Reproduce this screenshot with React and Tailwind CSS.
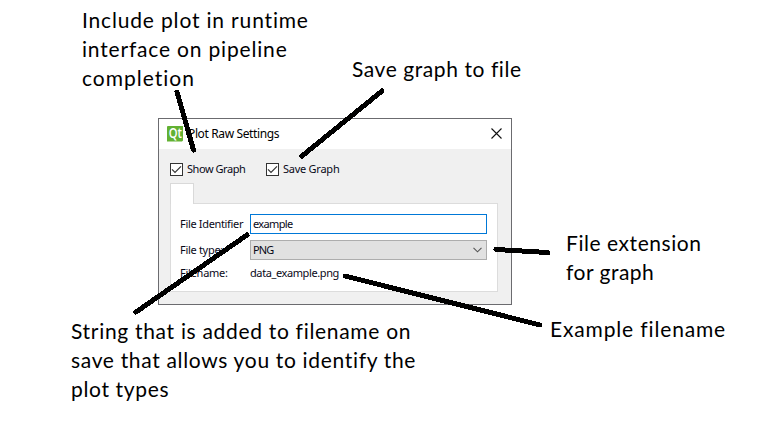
const noteFont = "font-['Lato',sans-serif] text-[21px] leading-[29px] text-black whitespace-nowrap";

function Note({ className, lines }) {
  return (
    <div className={`absolute flex flex-col items-start ${noteFont} ${className}`}>
      {lines.map(([text, tracking]) => (
        <span key={text} className={tracking}>{text}</span>
      ))}
    </div>
  );
}

function QtLogo() {
  return (
    <div className="flex h-4 w-4 shrink-0 items-center justify-center bg-[#62b132] [clip-path:polygon(1px_0,100%_0,100%_15px,15px_100%,0_100%,0_1px)]">
      <span className="origin-center scale-x-[0.8] pb-[2px] font-['Open_Sans',sans-serif] text-[14px] font-semibold leading-[14px] text-white">Qt</span>
    </div>
  );
}

function Check({ label, tracking }) {
  return (
    <label className="flex items-center gap-[4px]">
      <span className="flex h-[13px] w-[13px] items-center justify-center border border-[#333] bg-white">
        <svg width="11" height="11" viewBox="0 0 11 11" fill="none" stroke="#333" strokeWidth="1.2">
          <path d="M1 5.3 L4 8.3 L10 2.3" />
        </svg>
      </span>
      <span className={`w-[58px] whitespace-nowrap ${tracking}`}>{label}</span>
    </label>
  );
}

function Dialog() {
  return (
    <div className="absolute left-[158px] top-[118px] flex h-[187px] w-[354px] flex-col border border-[#6b6b6f] bg-[#f0f0f0] font-['Noto_Sans',sans-serif] text-[11px] leading-[14px] text-[#080818]">
      <div className="flex h-[30px] shrink-0 items-center bg-white pl-2 pr-[9px] pb-px">
        <QtLogo />
        <span className="ml-[5px] pt-px text-[12px] tracking-[-0.37px] text-black">Plot Raw Settings</span>
        <svg className="ml-auto" width="11" height="11" viewBox="0 0 11 11" stroke="#111" strokeWidth="1.1">
          <path d="M0.5 0.5 L10.5 10.5 M10.5 0.5 L0.5 10.5" />
        </svg>
      </div>
      <div className="flex h-[34px] shrink-0 items-start gap-[21px] pl-[11px] pt-[13px]">
        <Check label="Show Graph" tracking="tracking-[-0.45px]" />
        <Check label="Save Graph" tracking="tracking-[-0.25px]" />
      </div>
      <div className="ml-[11px] flex flex-col">
        <div className="z-10 -mb-px h-[21px] w-6 border border-b-0 border-[#d9d9d9] bg-white" />
        <div className="grid h-[89px] w-[328px] grid-cols-[70px_237px] grid-rows-[20px_20px_14px] items-center gap-y-[6px] border border-[#dcdcdc] bg-white pl-[9px] pt-[10px]">
          <span className="tracking-[-0.33px]">File Identifier</span>
          <div className="flex h-5 items-center border border-[#0078d7] bg-white pl-[2px] tracking-[-0.65px]">example</div>
          <span className="tracking-[-0.3px]">File type:</span>
          <div className="flex h-5 items-center justify-between border border-[#adadad] bg-[#e1e1e1] pl-[2px] pr-[4px]">
            <span className="tracking-[-0.9px]">PNG</span>
            <svg width="9" height="6" viewBox="0 0 9 6" fill="none" stroke="#555" strokeWidth="1.1">
              <path d="M0.5 0.8 L4.5 4.8 L8.5 0.8" />
            </svg>
          </div>
          <span className="tracking-[-0.25px]">Filename:</span>
          <span className="tracking-[-0.4px]">data_example.png</span>
        </div>
      </div>
    </div>
  );
}

export default function App() {
  return (
    <div className="relative h-[426px] w-[757px] overflow-hidden bg-white">
      <Dialog />
      <Note className="left-[82px] top-[5px]" lines={[["Include plot in runtime", "tracking-[0.83px]"], ["interface on pipeline", "tracking-[0.82px]"], ["completion", "tracking-[1px]"]]} />
      <Note className="left-[352px] top-[54px]" lines={[["Save graph to file", "tracking-[0.57px]"]]} />
      <Note className="left-[566px] top-[228px]" lines={[["File extension", "tracking-[0.56px]"], ["for graph", "tracking-[0.5px]"]]} />
      <Note className="left-[550px] top-[314px]" lines={[["Example filename", "tracking-[0.85px]"]]} />
      <Note className="left-[71px] top-[316px]" lines={[["String that is added to filename on", "tracking-[0.69px]"], ["save that allows you to identify the", "tracking-[0.67px]"], ["plot types", "tracking-[0.65px]"]]} />
      <svg className="absolute left-0 top-0 z-20" width="757" height="426" viewBox="0 0 757 426" stroke="#000" strokeWidth="5" strokeLinecap="round" shapeRendering="crispEdges">
        <path d="M177 92 L193.5 150" />
        <path d="M382 91 L302 156" />
        <path d="M247 235 L136 312" />
        <path d="M496 249.5 L548 252.5" />
        <path d="M345 276 L540 325" />
      </svg>
    </div>
  );
}
